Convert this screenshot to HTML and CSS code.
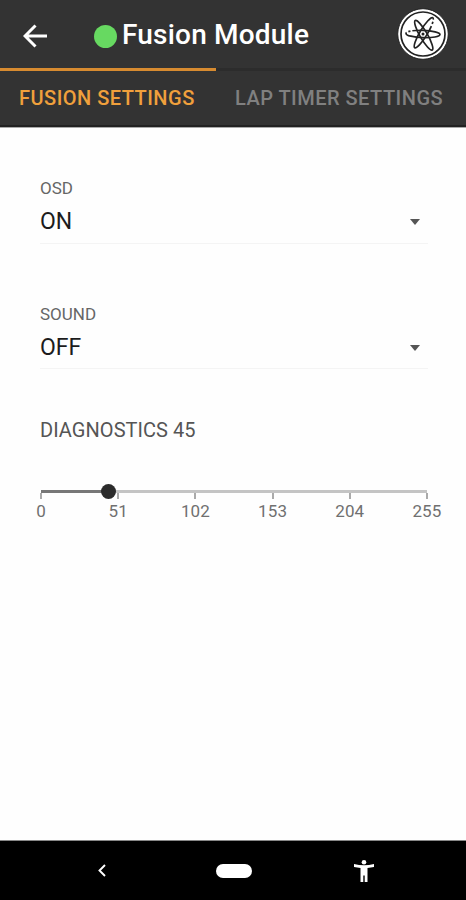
FILE: index.html
```html
<!DOCTYPE html>
<html lang="en">
<head>
  <meta charset="UTF-8">
  <meta name="viewport" content="width=device-width, initial-scale=1">
  <title>Fusion Module</title>
  <link rel="stylesheet" href="styles.css">
</head>
<body>
  <header class="toolbar">
    <svg class="back" viewBox="0 0 24 24" width="24" height="24">
      <path d="M12.5 1.5L2 12l10.500 10.500M2.500 12H24" fill="none" stroke="#fff" stroke-width="3"/>
    </svg>
    <span class="status"></span>
    <h1>Fusion Module</h1>
    <svg class="logo" viewBox="-26 -26 52 52" width="52" height="52">
      <circle r="25.300" fill="#fff" stroke="#222" stroke-width="1"/>
      <circle r="22" fill="none" stroke="#222" stroke-width="1.700"/>
      <g fill="none" stroke="#222" stroke-width="1.700">
        <ellipse rx="17" ry="3.700" transform="rotate(2)" stroke-dasharray="37 2 2 2 80"/>
        <ellipse cx="1.500" rx="17" ry="3.700" transform="rotate(60)"/>
        <ellipse cx="1.500" rx="17.500" ry="3.700" transform="rotate(-59)" stroke-dasharray="2 2.500 2 2.500 80"/>
      </g>
      <circle r="1.500" fill="#222"/>
    </svg>
  </header>

  <nav class="tabs">
    <a class="tab active">FUSION SETTINGS</a>
    <a class="tab">LAP TIMER SETTINGS</a>
  </nav>

  <main>
    <div class="field">
      <label>OSD</label>
      <div class="select"><span>ON</span><i class="caret"></i></div>
    </div>
    <div class="field">
      <label>SOUND</label>
      <div class="select"><span>OFF</span><i class="caret"></i></div>
    </div>

    <p class="diagnostics">DIAGNOSTICS 45</p>
    <div class="slider">
      <div class="track">
        <div class="fill" style="width: 17.647%"></div>
        <div class="knob"></div>
      </div>
      <div class="ticks">
        <span>0</span>
        <span>51</span>
        <span>102</span>
        <span>153</span>
        <span>204</span>
        <span>255</span>
      </div>
    </div>
  </main>

  <footer class="navbar">
    <svg viewBox="0 0 8 13" width="8" height="13">
      <path d="M7 1L1.500 6.500L7 12" fill="none" stroke="#fff" stroke-width="1.900"/>
    </svg>
    <span class="home"></span>
    <svg viewBox="0 0 20 22" width="20" height="22">
      <circle cx="10" cy="2.300" r="2.300" fill="#fff"/>
      <path d="M0 4Q10 6.500 20 4V7L13.500 8V22H10.700V15.500H9.300V22H6.500V8L0 7Z" fill="#fff"/>
    </svg>
  </footer>
</body>
</html>
```
FILE: styles.css
```css
* {
  box-sizing: border-box;
}
body {
  margin: 0;
  height: 900px;
  display: flex;
  flex-direction: column;
  background: #fefefe;
  font-family: Roboto, sans-serif;
  overflow: hidden;
}
.toolbar {
  height: 68px;
  display: flex;
  align-items: center;
  padding: 0 17px 0 23px;
  background: #333;
}
.back {
  margin-top: 4px;
}
.status {
  width: 23px;
  height: 23px;
  margin: 4px 5px 0 47px;
  border-radius: 50%;
  background: #67d961;
}
h1 {
  margin: 2px 0 0;
  font-size: 28px;
  font-weight: 500;
  line-height: 32px;
  letter-spacing: 0.2px;
  white-space: nowrap;
  color: #fff;
}
.logo {
  margin-left: auto;
}
.tabs {
  height: 60px;
  display: flex;
  background: #333;
  border-bottom: 1px solid #aaa;
  box-shadow: inset 0 -2px #222;
}
.tab {
  border-top: 3px solid #2c2c2c;
  padding: 15px 0 0 19px;
  font-size: 20px;
  line-height: 24px;
  font-weight: 500;
  letter-spacing: 0.48px;
  white-space: nowrap;
  color: #808080;
  flex: 1;
}
.tab.active {
  flex: 0 0 216px;
  border-top-color: #d78b30;
  color: #f0a03c;
}
main {
  flex: 1;
  padding: 50px 38px 0 40px;
}
.field {
  height: 66px;
  margin-bottom: 60px;
  border-bottom: 1px solid #f4f4f4;
}
.field + .field {
  height: 65px;
  margin-bottom: 49px;
}
label {
  display: block;
  font-size: 17px;
  line-height: 20px;
  color: #666;
}
.select {
  display: flex;
  align-items: center;
  justify-content: space-between;
  margin-top: 10px;
  padding-right: 8px;
  font-size: 23px;
  line-height: 28px;
  color: #1c1c1c;
}
.caret {
  border: 5px solid transparent;
  border-top: 6px solid #555;
  border-bottom: 0;
}
.diagnostics {
  margin: 0;
  font-size: 20px;
  line-height: 24px;
  letter-spacing: 0.05px;
  color: #555;
}
.slider {
  width: 386px;
  margin: 48px 0 0 1px;
}
.track {
  display: flex;
  align-items: center;
  height: 3px;
  background: #c4c4c4;
}
.fill {
  height: 3px;
  background: #777;
}
.knob {
  width: 15px;
  height: 15px;
  margin-left: -8px;
  border-radius: 50%;
  background: #2b2b2b;
}
.ticks {
  display: flex;
  justify-content: space-between;
  margin: 0 -22px;
}
.ticks span {
  width: 44px;
  text-align: center;
  font-size: 17px;
  line-height: 20px;
  letter-spacing: 0.1px;
  color: #707070;
}
.ticks span::before {
  content: "";
  display: block;
  width: 2px;
  height: 6px;
  margin: 0 auto 2px;
  background: #aaa;
}
.navbar {
  height: 60px;
  display: flex;
  align-items: center;
  padding-left: 98px;
  border-top: 1px solid #888;
  background: #000;
}
.home {
  width: 36px;
  height: 14px;
  margin: 0 102px 0 110px;
  border-radius: 7px;
  background: #fff;
}
```
